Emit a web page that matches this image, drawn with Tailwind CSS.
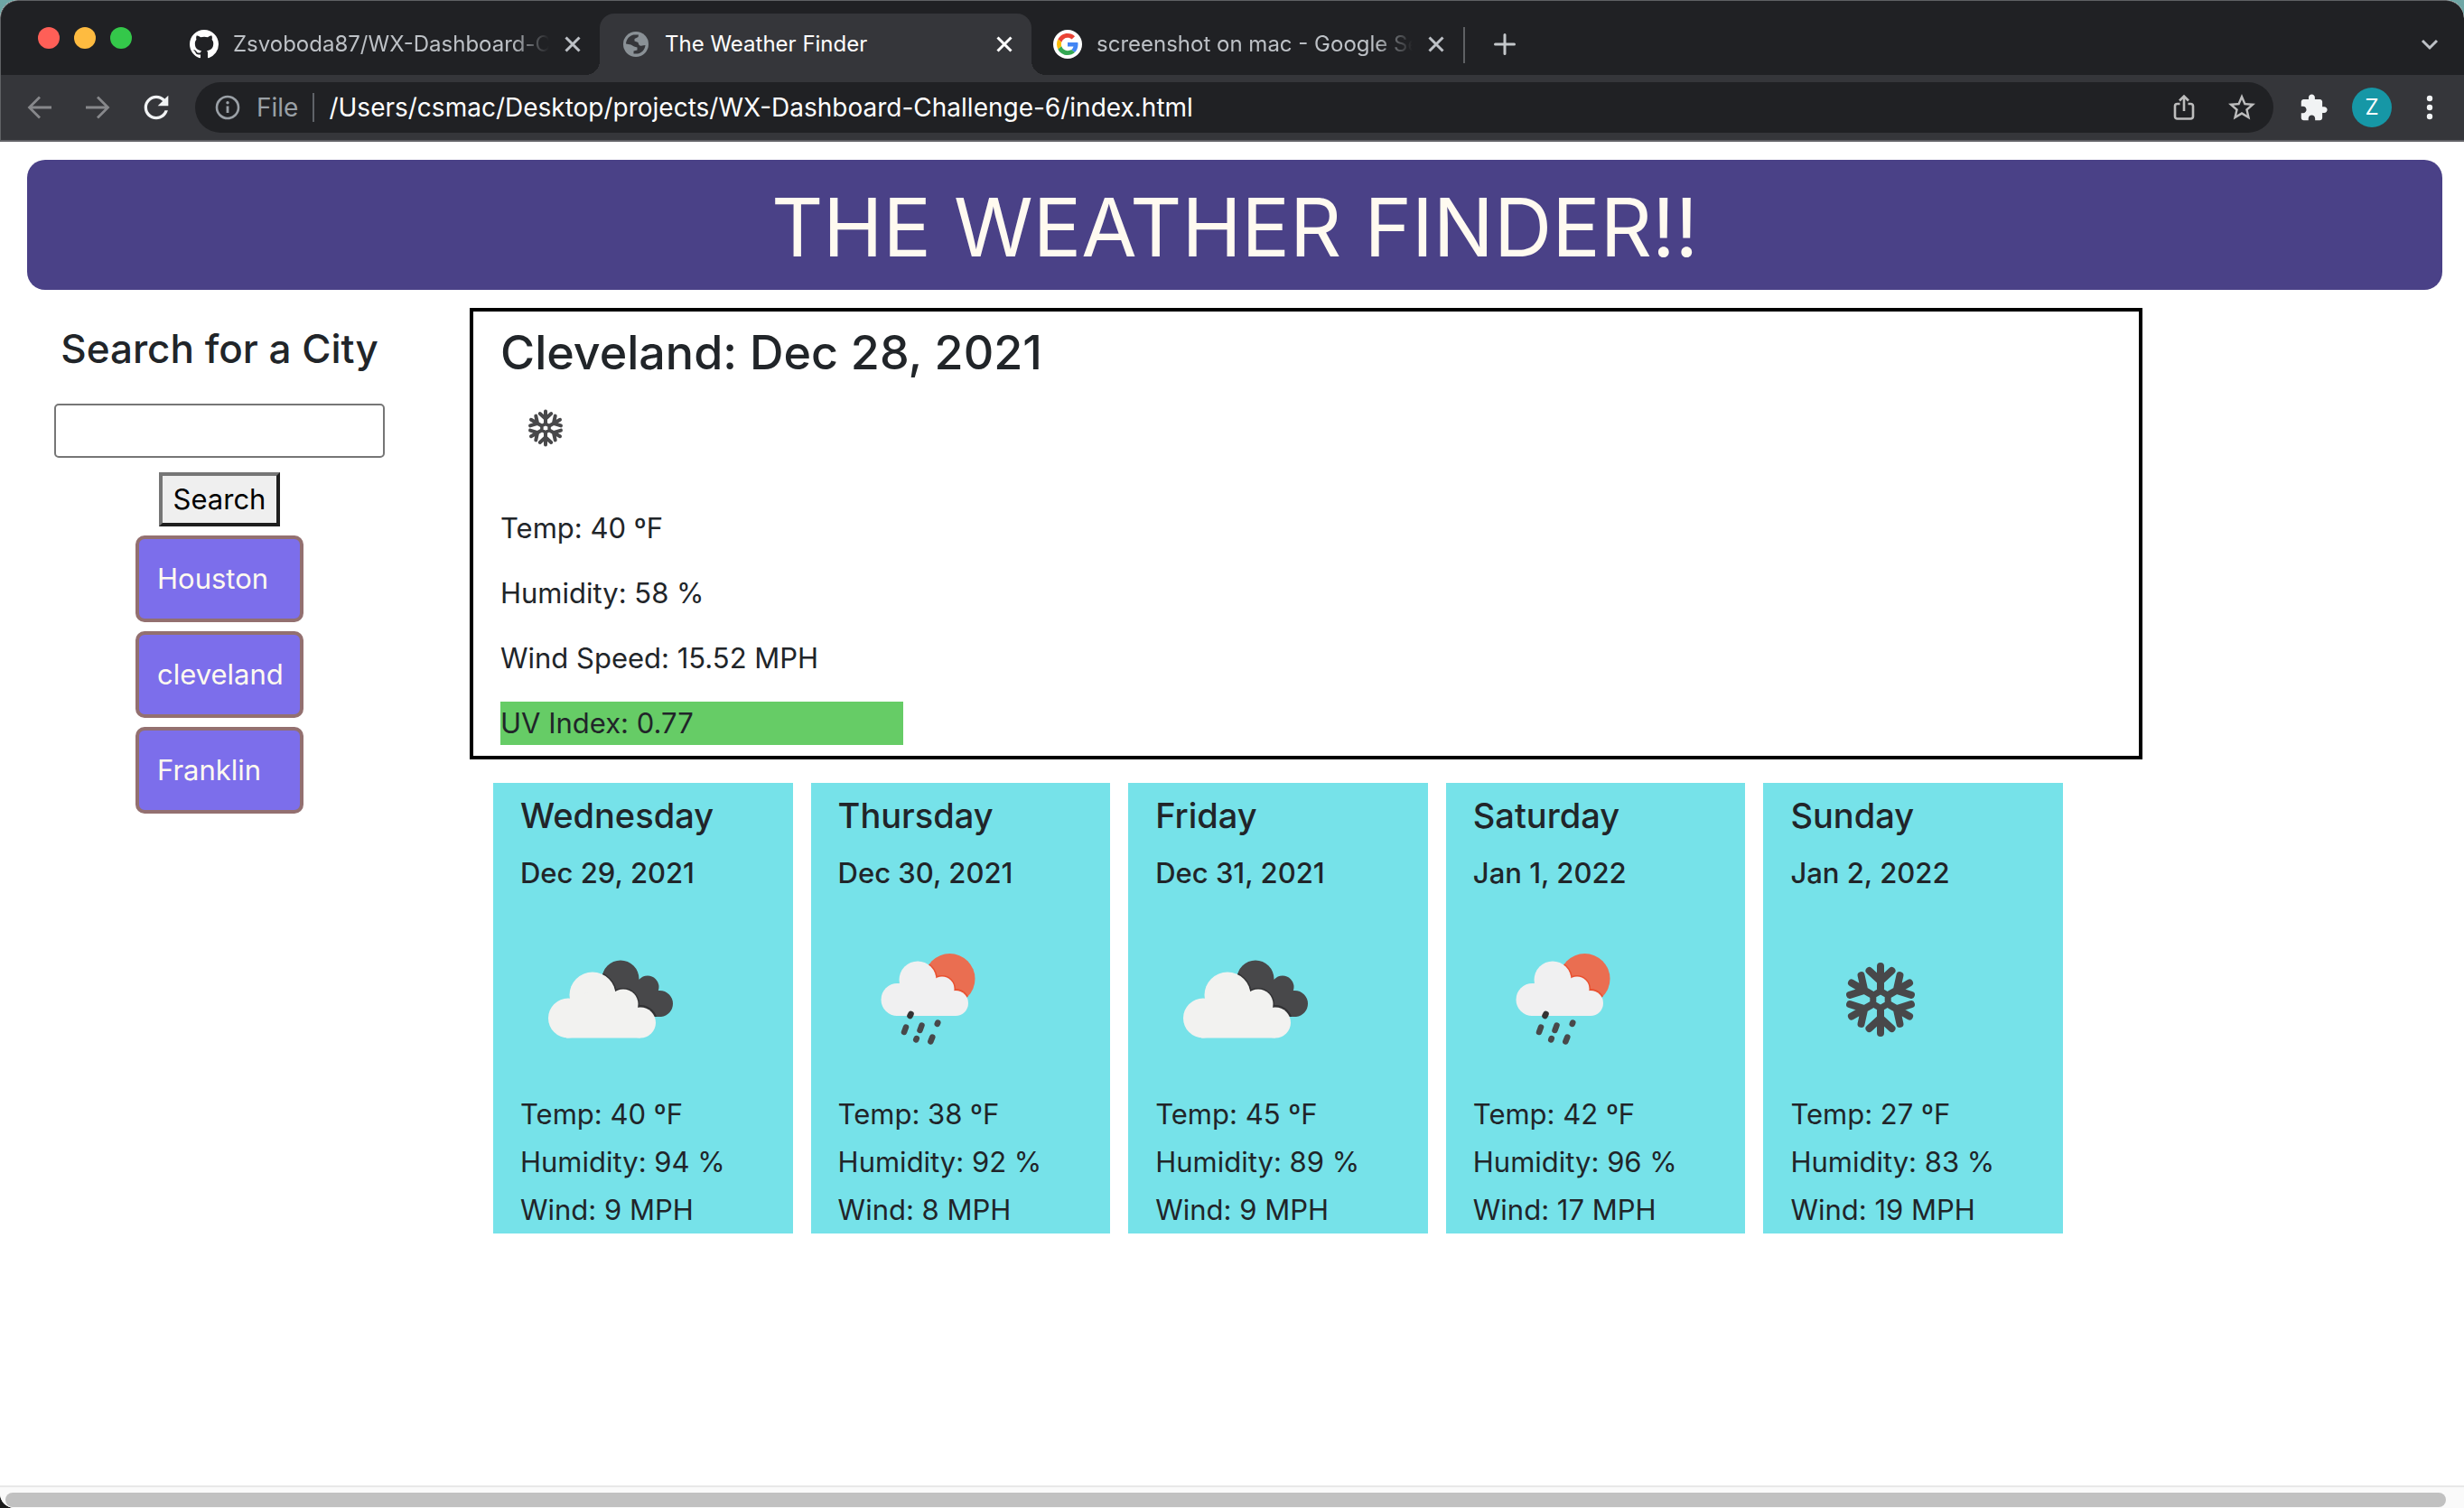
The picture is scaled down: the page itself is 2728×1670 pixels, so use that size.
<!DOCTYPE html>
<html lang="en">
<head>
<meta charset="utf-8">
<title>The Weather Finder</title>
<script src="https://cdn.jsdelivr.net/npm/@tailwindcss/browser@4"></script>
</head>
<body class="bg-linear-to-b from-[#6ea7a6] to-[#1a1a1a] font-['Inter','Liberation_Sans',sans-serif] text-[#212529]">

<!-- Shared symbols -->
<svg class="absolute size-0" aria-hidden="true">
  <defs>
    <clipPath id="darkclip"><circle cx="111" cy="77" r="20.500"/><circle cx="141" cy="86" r="12.500"/><circle cx="154.500" cy="104.500" r="14.500"/><path d="M92 80L111 60L140 85L156 100V119H100Z"/></clipPath>
    <clipPath id="sunclip"><circle cx="123.500" cy="77" r="28"/></clipPath>
  </defs>
  <symbol id="close" viewBox="0 0 20 20"><path d="M2.500 2.500l15 15M17.500 2.500l-15 15" fill="none" stroke="currentColor" stroke-width="3"/></symbol>
  <symbol id="snow" viewBox="0 0 200 200">
    <g fill="none" stroke="#48484a" stroke-width="8" stroke-linecap="round" transform="translate(100 100)">
      <path d="M0-9.500L8.200-4.750V4.750L0 9.500L-8.200 4.750V-4.750Z" stroke-width="7" stroke-linejoin="round"/>
      <path id="arm" d="M0-12V-37M-12.500-32L0-20.500L12.500-32"/>
      <use href="#arm" transform="rotate(60)"/><use href="#arm" transform="rotate(120)"/>
      <use href="#arm" transform="rotate(180)"/><use href="#arm" transform="rotate(240)"/><use href="#arm" transform="rotate(300)"/>
    </g>
  </symbol>
  <symbol id="clouds" viewBox="0 0 200 200">
    <g clip-path="url(#darkclip)">
      <rect x="80" y="50" width="100" height="80" fill="#48484a"/>
      <g fill="none" stroke="#323234" stroke-width="3"><circle cx="80" cy="95" r="25.500"/><circle cx="114" cy="105" r="16.500"/><circle cx="133" cy="125" r="17.500"/></g>
    </g>
    <g fill="#f2f2f0"><circle cx="53" cy="120.500" r="22"/><circle cx="80" cy="95" r="25.500"/><circle cx="114" cy="105" r="16.500"/><circle cx="133" cy="125.500" r="17"/><path d="M53 100L80 90L114 100L133 115V142.500H51Z"/></g>
  </symbol>
  <symbol id="rain" viewBox="0 0 200 200">
    <g clip-path="url(#sunclip)">
      <rect x="90" y="45" width="70" height="65" fill="#ea6e51"/>
      <g fill="none" stroke="#e9502f" stroke-width="3"><circle cx="88" cy="78" r="20.500"/><circle cx="115" cy="88" r="13.500"/><circle cx="130" cy="103.500" r="14"/></g>
    </g>
    <g fill="#f0f0f1"><circle cx="65.500" cy="100" r="18"/><circle cx="88" cy="78" r="20.500"/><circle cx="115" cy="88" r="13.500"/><circle cx="130" cy="104" r="14"/><path d="M65 83L88 74L115 84L130 95V118H64Z"/></g>
    <g stroke="#48484a" stroke-width="6.500" stroke-linecap="round"><path d="M80.500 116l-1 2" stroke="#333"/><path d="M75 130.500l-2 5.500M92.500 128.500l-2 5.500M110.300 125.500l-.6 1.500M86.800 143l-.6 1.500M104.300 141.500l-2 5"/></g>
  </symbol>
</svg>

<div class="flex min-h-screen flex-col overflow-hidden rounded-t-[20px] rounded-bl-[16px] bg-white">

  <header class="rounded-t-[20px] border-t border-l border-[#5f6164] bg-[#202124]">
    <!-- Tab strip -->
    <div class="flex h-[82px] items-start pt-[14px] text-[24px] text-[#bdc1c6]">
      <div class="mt-[15px] mr-10 ml-[41px] flex shrink-0 gap-4">
        <span class="size-6 rounded-full bg-[#fe5f57]"></span>
        <span class="size-6 rounded-full bg-[#febb40]"></span>
        <span class="size-6 rounded-full bg-[#34c84a]"></span>
      </div>
      <div class="flex h-[68px] w-[478px] items-center gap-4 pr-5 pl-6">
        <svg class="size-8 shrink-0" viewBox="0 0 16 16" fill="#fff"><path d="M8 0C3.580 0 0 3.580 0 8c0 3.540 2.290 6.530 5.470 7.590.4.070.55-.17.55-.38 0-.19-.01-.82-.01-1.490-2.010.37-2.530-.49-2.690-.94-.09-.23-.48-.94-.82-1.130-.28-.15-.68-.52-.01-.53.63-.01 1.080.58 1.230.82.72 1.210 1.870.87 2.330.66.07-.52.28-.87.51-1.070-1.780-.2-3.640-.89-3.640-3.950 0-.87.31-1.590.82-2.150-.08-.2-.36-1.020.08-2.120 0 0 .67-.21 2.200.82.64-.18 1.320-.27 2-.27s1.360.09 2 .27c1.530-1.040 2.200-.82 2.200-.82.44 1.100.16 1.920.08 2.120.51.56.82 1.270.82 2.150 0 3.070-1.870 3.750-3.650 3.950.29.25.54.73.54 1.480 0 1.070-.01 1.930-.01 2.200 0 .21.15.46.55.38A8.010 8.010 0 0 0 16 8c0-4.420-3.580-8-8-8z"/></svg>
        <span class="min-w-0 flex-1 whitespace-nowrap [mask-image:linear-gradient(to_right,#000_88%,transparent)]">Zsvoboda87/WX-Dashboard-C</span>
        <button aria-label="Close tab" class="size-5 shrink-0"><svg class="size-5"><use href="#close"/></svg></button>
      </div>
      <div class="relative flex h-[68px] w-[478px] items-center gap-4 rounded-t-[16px] bg-[#35363a] pr-5 pl-6 text-white">
        <span class="absolute bottom-0 -left-4 size-4 bg-[radial-gradient(circle_at_0_0,#202124_16px,#35363a_16px)]"></span>
        <span class="absolute -right-4 bottom-0 size-4 bg-[radial-gradient(circle_at_100%_0,#202124_16px,#35363a_16px)]"></span>
        <svg class="size-8 shrink-0" viewBox="0 0 32 32"><circle cx="16" cy="16" r="14" fill="#8a9196"/><path d="M5 15.500C5.500 10 9 6.500 13.500 5.500H19L18.500 8L14.500 10V12.500L18.500 14C19 17 20.500 18.500 23 17.500L26.500 17C26 22 22.500 26 17.500 26.500H13.500V23.500L17.500 22.500V19.500L14 18.500L10.500 16.500Z" fill="#35363a"/></svg>
        <span class="min-w-0 flex-1 whitespace-nowrap">The Weather Finder</span>
        <button aria-label="Close tab" class="size-5 shrink-0"><svg class="size-5"><use href="#close"/></svg></button>
      </div>
      <div class="flex h-[68px] w-[478px] items-center gap-4 pr-5 pl-6">
        <span class="flex size-8 shrink-0 items-center justify-center rounded-full bg-white"><svg class="size-6" viewBox="0 0 48 48"><path fill="#EA4335" d="M24 9.500c3.540 0 6.710 1.220 9.210 3.600l6.850-6.850C35.900 2.380 30.470 0 24 0 14.620 0 6.510 5.380 2.560 13.220l7.980 6.190C12.430 13.720 17.740 9.500 24 9.500z"/><path fill="#4285F4" d="M46.980 24.550c0-1.570-.15-3.090-.38-4.550H24v9.020h12.940c-.58 2.960-2.260 5.480-4.780 7.180l7.730 6c4.510-4.180 7.090-10.360 7.090-17.650z"/><path fill="#FBBC05" d="M10.530 28.590c-.48-1.450-.76-2.990-.76-4.590s.27-3.140.76-4.590l-7.980-6.190C.92 16.460 0 20.120 0 24c0 3.880.92 7.540 2.560 10.780l7.970-6.190z"/><path fill="#34A853" d="M24 48c6.480 0 11.930-2.130 15.890-5.810l-7.730-6c-2.150 1.450-4.920 2.300-8.160 2.300-6.260 0-11.570-4.220-13.470-9.910l-7.980 6.190C6.510 42.620 14.620 48 24 48z"/></svg></span>
        <span class="min-w-0 flex-1 whitespace-nowrap [mask-image:linear-gradient(to_right,#000_88%,transparent)]">screenshot on mac - Google Se</span>
        <button aria-label="Close tab" class="size-5 shrink-0"><svg class="size-5"><use href="#close"/></svg></button>
      </div>
      <span class="mt-[15px] h-10 w-0.5 bg-[#5f6164]"></span>
      <button aria-label="New tab" class="mt-[22px] ml-8"><svg class="size-6" viewBox="0 0 24 24"><path d="M12 1.500v21M1.500 12h21" stroke="#c4c7ca" stroke-width="3" stroke-linecap="round"/></svg></button>
      <button aria-label="Tab search" class="mt-[24px] mr-7 ml-auto"><svg class="size-5" viewBox="0 0 20 20"><path d="M2 6l8 8 8-8" fill="none" stroke="#bdc1c6" stroke-width="3"/></svg></button>
    </div>

    <!-- Toolbar -->
    <div class="flex h-[74px] items-center border-b-2 border-[#616166] bg-[#35363a] pr-7 pl-[27px]">
      <button aria-label="Back" class="mr-8"><svg class="size-8" viewBox="0 0 32 32"><path d="M29 16H5M16 4.500L4.500 16L16 27.500" fill="none" stroke="#87888b" stroke-width="2.800"/></svg></button>
      <button aria-label="Forward" class="mr-[29px]"><svg class="size-8" viewBox="0 0 32 32"><path d="M3 16h24M16 4.500L27.500 16L16 27.500" fill="none" stroke="#87888b" stroke-width="2.800"/></svg></button>
      <button aria-label="Reload" class="mr-[23px]"><svg class="size-10" viewBox="0 0 24 24" fill="#f1f3f4"><path d="M17.650 6.350C16.200 4.900 14.210 4 12 4c-4.420 0-7.990 3.580-7.990 8s3.570 8 7.990 8c3.730 0 6.840-2.550 7.730-6h-2.080c-.82 2.330-3.040 4-5.650 4-3.310 0-6-2.690-6-6s2.690-6 6-6c1.660 0 3.140.69 4.220 1.780L13 11h7V4l-2.350 2.350z"/></svg></button>
      <div class="flex h-14 min-w-0 flex-1 items-center rounded-full bg-[#202124] pr-[17px] pl-[22px] text-[28px]">
        <svg class="size-7 shrink-0" viewBox="0 0 28 28"><circle cx="14" cy="14" r="12" fill="none" stroke="#9aa0a6" stroke-width="2.600"/><path d="M14 12.500v7.500" stroke="#9aa0a6" stroke-width="2.800"/><circle cx="14" cy="8.800" r="1.700" fill="#9aa0a6"/></svg>
        <label for="url" class="ml-[18px] text-[#9aa0a6]">File</label>
        <span class="mx-4 h-8 w-0.5 bg-[#5f6368]"></span>
        <input id="url" class="min-w-0 flex-1 bg-transparent text-white outline-none" value="/Users/csmac/Desktop/projects/WX-Dashboard-Challenge-6/index.html">
        <button aria-label="Share"><svg class="size-8" viewBox="0 0 32 32"><path d="M11.500 12H8.500A2.500 2.500 0 0 0 6 14.500V26a2.500 2.500 0 0 0 2.500 2.500h15A2.500 2.500 0 0 0 26 26V14.500a2.500 2.500 0 0 0-2.500-2.500H20.500M16 20V4M11 8.500L16 3.500L21 8.500" fill="none" stroke="#bdbdbd" stroke-width="2.600"/></svg></button>
        <button aria-label="Bookmark" class="ml-[30px]"><svg class="size-9" viewBox="0 0 24 24" fill="#bdbdbd"><path d="M22 9.240l-7.190-.62L12 2 9.190 8.630 2 9.240l5.460 4.730L5.820 21 12 17.270 18.180 21l-1.630-7.030L22 9.240zM12 15.400l-3.760 2.270 1-4.280-3.320-2.880 4.380-.38L12 6.100l1.710 4.040 4.380.38-3.320 2.880 1 4.280L12 15.400z"/></svg></button>
      </div>
      <button aria-label="Extensions" class="ml-7"><svg class="size-[33px]" viewBox="0 0 24 24" fill="#f1f3f4"><path d="M20.500 11H19V7c0-1.100-.9-2-2-2h-4V3.500C13 2.120 11.880 1 10.500 1S8 2.120 8 3.500V5H4c-1.100 0-1.990.9-1.990 2v3.800H3.500c1.490 0 2.700 1.210 2.700 2.700s-1.210 2.700-2.700 2.700H2V20c0 1.100.9 2 2 2h3.800v-1.500c0-1.490 1.210-2.700 2.700-2.700 1.490 0 2.700 1.210 2.700 2.700V22H17c1.100 0 2-.9 2-2v-4h1.500c1.380 0 2.500-1.120 2.500-2.500S21.880 11 20.500 11z"/></svg></button>
      <button aria-label="Profile" class="ml-[26px] size-11 rounded-full bg-[#1697a6] text-[24px] text-white">Z</button>
      <button aria-label="Menu" class="ml-8"><svg class="h-8 w-5" viewBox="0 0 20 32" fill="#f1f3f4"><circle cx="10" cy="6" r="3.200"/><circle cx="10" cy="16" r="3.200"/><circle cx="10" cy="26" r="3.200"/></svg></button>
    </div>
  </header>

  <!-- Page -->
  <main class="flex-1 pt-5 pr-6 pl-[30px] text-[31px] leading-[48px]">
    <h1 class="rounded-[20px] bg-[#4a4187] pt-[19px] pb-[13px] text-center text-[89px] leading-[112px] text-[#fffaf0]">THE WEATHER FINDER!!</h1>

    <div class="mt-5 flex items-start">
      <form class="flex w-[426px] shrink-0 flex-col items-center pt-4">
        <label for="city" class="text-[44px] leading-[58px] font-medium">Search for a City</label>
        <input id="city" class="mt-8 h-[60px] w-[366px] rounded-[5px] border-2 border-[#767676] bg-white px-2">
        <button type="button" class="mt-4 h-[60px] w-[134px] border-4 border-t-[#767676] border-r-[#1f1f1f] border-b-[#1f1f1f] border-l-[#767676] bg-[#efefef] text-black">Search</button>
        <div class="mt-[10px] flex w-[186px] flex-col gap-[10px] text-[#fffaf0]">
          <button type="button" class="h-24 rounded-[10px] border-4 border-[#937070] bg-[#7c6eeb] pl-5 text-left">Houston</button>
          <button type="button" class="h-24 rounded-[10px] border-4 border-[#937070] bg-[#7c6eeb] pl-5 text-left">cleveland</button>
          <button type="button" class="h-24 rounded-[10px] border-4 border-[#937070] bg-[#7c6eeb] pl-5 text-left">Franklin</button>
        </div>
      </form>

      <div class="ml-16 min-w-0 flex-1 pr-[332px]">
        <section class="border-4 border-black px-[30px] pt-[14px] pb-3">
          <h2 class="text-[52px] leading-[64px] font-medium">Cleveland: Dec 28, 2021</h2>
          <svg class="mt-px size-[100px]"><use href="#snow"/></svg>
          <div class="mt-[37px] flex flex-col gap-6">
            <p>Temp: 40 ºF</p>
            <p>Humidity: 58 %</p>
            <p>Wind Speed: 15.52 MPH</p>
            <p class="w-1/4 bg-[#66cc66]">UV Index: 0.77</p>
          </div>
        </section>

        <section class="mt-[26px] mr-[88px] ml-[26px] grid grid-cols-5 gap-5">
          <article class="bg-[#76e2e9] pt-3 pl-[30px]">
            <h3 class="text-[38px] leading-[48px] font-medium">Wednesday</h3>
            <h4 class="mt-5 leading-[40px] font-medium">Dec 29, 2021</h4>
            <svg class="mt-5 size-[200px]"><use href="#clouds"/></svg>
            <p class="leading-[53px]">Temp: 40 ºF</p><p class="leading-[53px]">Humidity: 94 %</p><p class="leading-[53px]">Wind: 9 MPH</p>
          </article>
          <article class="bg-[#76e2e9] pt-3 pl-[30px]">
            <h3 class="text-[38px] leading-[48px] font-medium">Thursday</h3>
            <h4 class="mt-5 leading-[40px] font-medium">Dec 30, 2021</h4>
            <svg class="mt-5 size-[200px]"><use href="#rain"/></svg>
            <p class="leading-[53px]">Temp: 38 ºF</p><p class="leading-[53px]">Humidity: 92 %</p><p class="leading-[53px]">Wind: 8 MPH</p>
          </article>
          <article class="bg-[#76e2e9] pt-3 pl-[30px]">
            <h3 class="text-[38px] leading-[48px] font-medium">Friday</h3>
            <h4 class="mt-5 leading-[40px] font-medium">Dec 31, 2021</h4>
            <svg class="mt-5 size-[200px]"><use href="#clouds"/></svg>
            <p class="leading-[53px]">Temp: 45 ºF</p><p class="leading-[53px]">Humidity: 89 %</p><p class="leading-[53px]">Wind: 9 MPH</p>
          </article>
          <article class="bg-[#76e2e9] pt-3 pl-[30px]">
            <h3 class="text-[38px] leading-[48px] font-medium">Saturday</h3>
            <h4 class="mt-5 leading-[40px] font-medium">Jan 1, 2022</h4>
            <svg class="mt-5 size-[200px]"><use href="#rain"/></svg>
            <p class="leading-[53px]">Temp: 42 ºF</p><p class="leading-[53px]">Humidity: 96 %</p><p class="leading-[53px]">Wind: 17 MPH</p>
          </article>
          <article class="bg-[#76e2e9] pt-3 pl-[30px]">
            <h3 class="text-[38px] leading-[48px] font-medium">Sunday</h3>
            <h4 class="mt-5 leading-[40px] font-medium">Jan 2, 2022</h4>
            <svg class="mt-5 size-[200px]"><use href="#snow"/></svg>
            <p class="leading-[53px]">Temp: 27 ºF</p><p class="leading-[53px]">Humidity: 83 %</p><p class="leading-[53px]">Wind: 19 MPH</p>
          </article>
        </section>
      </div>
    </div>
  </main>

  <!-- Horizontal scrollbar -->
  <div class="h-[25px] border-t-2 border-[#e8e8e8] bg-[#fafafa] pt-1.5 pr-5 pl-1.5">
    <div class="h-4 rounded-full bg-[#c1c1c1]"></div>
  </div>
</div>
</body>
</html>
